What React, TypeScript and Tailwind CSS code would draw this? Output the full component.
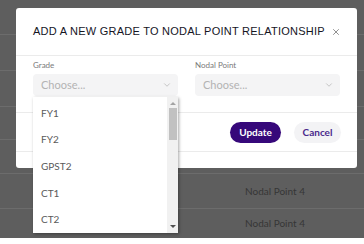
import { ChevronDown, X } from "lucide-react";

const grades = ["FY1", "FY2", "GPST2", "CT1", "CT2"];

function Select({ label }: { label: string }) {
  return (
    <div className="flex flex-1 flex-col">
      <span className="mb-[4px] h-[9px] text-[8px] leading-[9px] text-[#7a7a7a]">
        {label}
      </span>
      <div className="flex h-[22px] items-center justify-between rounded-[4px] bg-[#f4f4f5] pl-[8px] pr-[6px]">
        <span className="text-[11px] text-[#b3b3b3]">Choose...</span>
        <ChevronDown size={10} strokeWidth={1.5} className="text-[#a8a8a8]" />
      </div>
    </div>
  );
}

export default function App() {
  return (
    <div
      className="relative h-[244px] w-[364px] overflow-hidden bg-white"
      style={{ fontFamily: "Lato, 'Open Sans', sans-serif" }}
    >
      {/* BACKDROP TABLE */}
      <div className="flex h-[238px] flex-col bg-[#5e5e5e]">
        <div className="h-[35px] border-b border-[#6c6c6c]" />
        <div className="h-[36px] border-b border-[#6c6c6c]" />
        <div className="h-[36px] border-b border-[#6c6c6c]" />
        <div className="h-[34px] border-b border-[#6c6c6c]" />
        <div className="h-[34px] border-b border-[#6c6c6c]" />
        <div className="flex h-[35px] items-center border-b border-[#6c6c6c] pl-[196px]">
          <span className="w-[158px] text-center text-[10px] text-[#363636]">
            Nodal Point 4
          </span>
        </div>
        <div className="flex h-[29px] items-center pl-[196px]">
          <span className="w-[158px] text-center text-[10px] text-[#363636]">
            Nodal Point 4
          </span>
        </div>
      </div>

      {/* MODAL */}
      <div className="absolute left-[16px] top-[8px] flex h-[160px] w-[341px] flex-col rounded-[3px] bg-white">
        <div className="flex h-[48px] items-center justify-between border-b border-[#ebebeb] pl-[17px] pr-[16px]">
          <h2
            className="whitespace-nowrap text-[11px] tracking-[0.25px] text-[#15151f]"
            style={{ fontFamily: "'Liberation Sans', Arial, sans-serif" }}
          >
            ADD A NEW GRADE TO NODAL POINT RELATIONSHIP
          </h2>
          <X size={10} strokeWidth={1.8} className="shrink-0 text-[#6b6b6b]" />
        </div>

        <div className="relative flex h-[56px] gap-[17px] px-[17px] pt-[5px]">
          <Select label="Grade" />
          <Select label="Nodal Point" />

          {/* OPEN LIST */}
          <div className="absolute left-[17px] top-[41px] z-10 flex h-[136px] w-[145px] bg-white shadow-[1px_1px_3px_rgba(0,0,0,0.35)]">
            <ul className="flex flex-1 flex-col pt-[3px]">
              {grades.map((g) => (
                <li
                  key={g}
                  className="flex h-[27.2px] items-center pl-[8px] text-[10px] text-[#5a5a5a]"
                >
                  {g}
                </li>
              ))}
            </ul>
            <div className="flex w-[11px] flex-col items-center bg-[#f1f1f1]">
              <span className="mt-[5px] h-0 w-0 border-x-[3px] border-b-[3px] border-x-transparent border-b-[#a3a3a3]" />
              <span className="mt-[3px] h-[32px] w-[8px] bg-[#c1c1c1]" />
              <span className="mt-auto mb-[5px] h-0 w-0 border-x-[3px] border-t-[3px] border-x-transparent border-t-[#505050]" />
            </div>
          </div>
        </div>

        <div className="flex h-[40px] items-center justify-end gap-[13px] border-y border-[#ebebeb] pr-[16px]">
          <button className="h-[21px] w-[51px] rounded-full bg-[#36087a] text-[10px] font-bold text-white">
            Update
          </button>
          <button className="h-[21px] w-[47px] rounded-full bg-[#f3f3f5] text-[10px] font-bold text-[#4a2a8c]">
            Cancel
          </button>
        </div>
      </div>
    </div>
  );
}
